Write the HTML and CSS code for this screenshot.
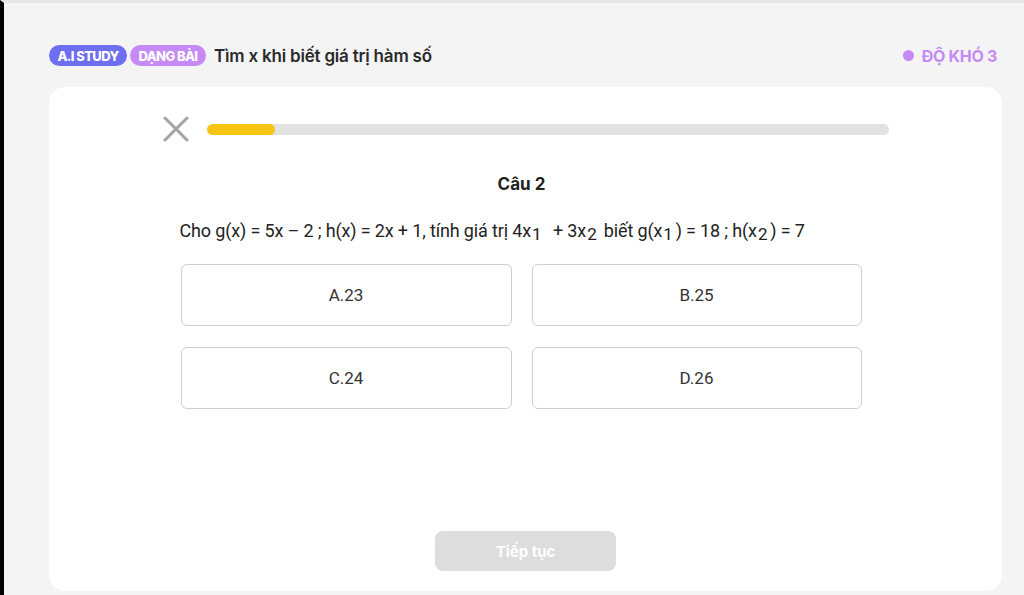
FILE: index.html
```html
<!DOCTYPE html>
<html lang="vi">
<head>
<meta charset="utf-8">
<title>A.I Study</title>
<link rel="stylesheet" href="styles.css">
</head>
<body>
<div class="page">
  <header class="topbar">
    <div class="crumbs">
      <span class="badge badge-ai">A.I STUDY</span>
      <span class="badge badge-type">DẠNG BÀI</span>
      <span class="title">Tìm x khi biết giá trị hàm số</span>
    </div>
    <div class="level"><span class="dot"></span>ĐỘ KHÓ 3</div>
  </header>

  <main class="card">
    <div class="progress-row">
      <svg class="close" width="26" height="26" viewBox="0 0 26 26" aria-hidden="true">
        <path d="M2 2 L24 24 M24 2 L2 24" stroke="#a3a3a3" stroke-width="3" stroke-linecap="round"/>
      </svg>
      <div class="track"><div class="fill" style="width:10%"></div></div>
    </div>

    <h2 class="qnum">Câu 2</h2>
    <div class="body">
      <p class="question">Cho g(x) = 5x – 2 ; h(x) = 2x + 1, tính giá trị 4x<sub>1</sub>&nbsp; + 3x<sub>2</sub> biết g(x<sub>1</sub>) = 18 ; h(x<sub>2</sub>) = 7</p>

      <div class="options">
        <button class="option">A.23</button>
        <button class="option">B.25</button>
        <button class="option">C.24</button>
        <button class="option">D.26</button>
      </div>
    </div>

    <div class="actions">
      <button class="next" disabled>Tiếp tục</button>
    </div>
  </main>
</div>
</body>
</html>
```

FILE: styles.css
```css
* { box-sizing: border-box; }
html, body { margin: 0; padding: 0; }
body {
  background: #f4f4f4;
  font-family: "Inter", "Roboto", "Liberation Sans", sans-serif;
  color: #222;
  width: 1024px;
  height: 595px;
  overflow: hidden;
}
.page {
  height: 595px;
  border-left: 4px solid #000;
  border-top: 3px solid #e6e6e6;
  display: flex;
  flex-direction: column;
}
.topbar {
  display: flex;
  justify-content: space-between;
  align-items: center;
  padding: 42px 27px 0 45px;
  height: 63px;
}
.crumbs {
  display: flex;
  align-items: center;
  gap: 3px;
}
.badge {
  display: inline-flex;
  align-items: center;
  justify-content: center;
  height: 21px;
  border-radius: 11px;
  color: #fff;
  font-weight: 800;
  font-size: 13px;
  letter-spacing: -0.6px;
  padding: 0 4px;
}
.badge-ai { background: #6d6ef0; width: 78px; }
.badge-type { background: #c58af5; width: 76px; }
.title {
  margin-left: 5px;
  font-size: 17px;
  font-weight: 600;
  color: #2a2a2a;
  letter-spacing: -0.2px;
}
.level {
  display: flex;
  align-items: center;
  gap: 8px;
  color: #c58af5;
  font-weight: 700;
  font-size: 16px;
  letter-spacing: -0.3px;
}
.dot {
  width: 11px;
  height: 11px;
  border-radius: 50%;
  background: #c58af5;
}

.card {
  margin: 21px 22px 4px 45px;
  flex: 1;
  background: #fff;
  border-radius: 16px;
  padding: 30px 0 0 0;
  display: flex;
  flex-direction: column;
  align-items: center;
  font-family: "Roboto", "Liberation Sans", sans-serif;
}
.progress-row {
  display: flex;
  align-items: center;
  gap: 18px;
  width: 726px;
  height: 24px;
}
.close { flex: none; }
.track {
  flex: 1;
  height: 11px;
  background: #e2e2e2;
  border-radius: 6px;
  overflow: hidden;
}
.fill {
  height: 100%;
  background: #f6c514;
  border-radius: 6px;
}
.qnum {
  margin: 33px 0 0 -8px;
  font-family: "Inter", "Roboto", sans-serif;
  font-size: 17px;
  font-weight: 700;
  color: #222;
}
.body {
  width: 681px;
  margin-left: -9px;
}
.question {
  margin: 25px 0 0 -1px;
  font-size: 18px;
  color: #222;
  letter-spacing: -0.15px;
  line-height: 24px;
  white-space: nowrap;
}
.question sub {
  font-size: 17px;
  vertical-align: -3px;
  line-height: 0;
  margin: 0 3px 0 1px;
}
.options {
  margin-top: 21px;
  display: grid;
  grid-template-columns: 331px 330px;
  column-gap: 20px;
  row-gap: 21px;
}
.option {
  height: 62px;
  background: #fff;
  border: 1px solid #cfcfcf;
  border-radius: 6px;
  font-family: "Roboto", "Liberation Sans", sans-serif;
  font-size: 17px;
  color: #333;
  cursor: pointer;
}
.actions {
  margin-top: auto;
  padding-bottom: 20px;
}
.next {
  width: 181px;
  height: 40px;
  border: 0;
  border-radius: 8px;
  background: #dddddd;
  color: #fff;
  font-family: "Inter", "Roboto", sans-serif;
  font-weight: 700;
  font-size: 15px;
}
```
